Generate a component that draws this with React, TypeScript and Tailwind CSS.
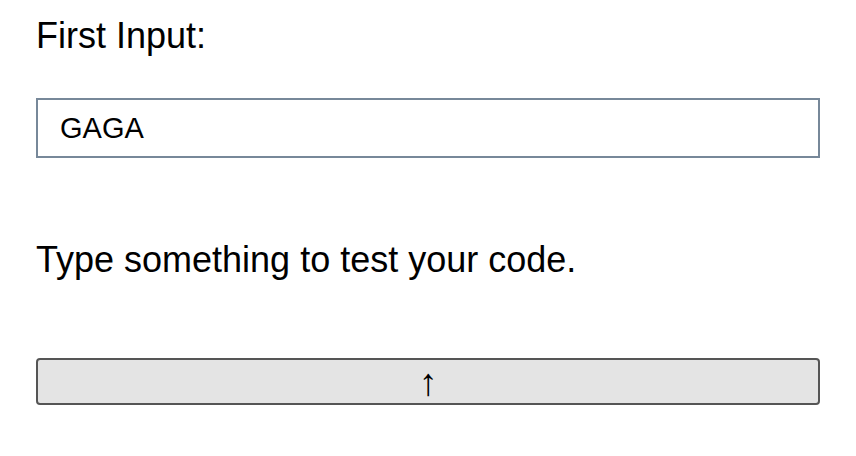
export default function App() {
  return (
    <div className="px-9 pt-[14px] font-['Liberation_Sans',Arial,sans-serif] text-black">
      <label htmlFor="first" className="block text-[36px] leading-[44px]">
        First Input:
      </label>
      <input
        id="first"
        readOnly
        value="GAGA"
        className="mt-[40px] block h-[60px] w-full border-2 border-[#778899] bg-white px-[22px] text-[29px] outline-none"
      />
      <p className="mt-[80px] text-[36px] leading-[44px]">Type something to test your code.</p>
      <button className="mt-[76px] flex h-[47px] w-full items-center justify-center rounded-[4px] border-2 border-[#555] bg-[#e4e4e4] text-[38px] leading-none">
        ↑
      </button>
    </div>
  );
}
